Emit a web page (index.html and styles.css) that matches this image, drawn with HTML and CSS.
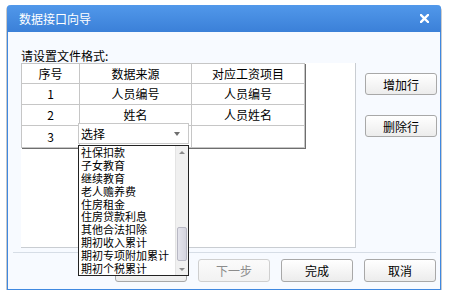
FILE: index.html
```html
<!DOCTYPE html>
<html lang="zh">
<head>
    <meta charset="UTF-8">
    <title>数据接口向导</title>
    <link rel="stylesheet" href="styles.css">
</head>
<body>
    <div class="dialog">
        <!-- 标题栏 -->
        <div class="titlebar">
            <span class="title">数据接口向导</span>
            <svg class="close" width="9" height="9" viewBox="0 0 9 9">
                <path d="M1 1 L8 8 M8 1 L1 8" stroke="#fff" stroke-width="2.4" stroke-linecap="square"/>
            </svg>
        </div>
        <div class="dialog-body">
            <div class="main">
                <div class="left">
                    <div class="label">请设置文件格式:</div>
                    <div class="panel">
                        <table class="grid">
                            <tr><td class="c1">序号</td><td class="c2">数据来源</td><td class="c3">对应工资项目</td></tr>
                            <tr><td>1</td><td>人员编号</td><td>人员编号</td></tr>
                            <tr><td>2</td><td>姓名</td><td>人员姓名</td></tr>
                            <tr class="last"><td>3</td><td class="select-cell">
                                <div class="select">
                                    <span>选择</span>
                                    <span class="arrow"></span>
                                </div>
                                <!-- 下拉列表 -->
                                <div class="dropdown">
                                    <ul class="options">
                                        <li>社保扣款</li>
                                        <li>子女教育</li>
                                        <li>继续教育</li>
                                        <li>老人赡养费</li>
                                        <li>住房租金</li>
                                        <li>住房贷款利息</li>
                                        <li>其他合法扣除</li>
                                        <li>期初收入累计</li>
                                        <li>期初专项附加累计</li>
                                        <li>期初个税累计</li>
                                    </ul>
                                    <div class="scrollbar">
                                        <span class="sb-up"></span>
                                        <span class="sb-track"><span class="sb-thumb"></span></span>
                                        <span class="sb-down"></span>
                                    </div>
                                </div>
                            </td><td></td></tr>
                        </table>
                    </div>
                </div>
                <div class="side">
                    <button class="btn">增加行</button>
                    <button class="btn">删除行</button>
                </div>
            </div>
            <!-- 底部按钮 -->
            <div class="footer">
                <button class="btn btn-hidden">上一步</button>
                <button class="btn" disabled>下一步</button>
                <button class="btn">完成</button>
                <button class="btn">取消</button>
            </div>
        </div>
    </div>
</body>
</html>
```

FILE: styles.css
```css
body {
    margin: 0;
    background-color: #ffffff;
    font-family: "Noto Sans CJK SC", "Liberation Sans", sans-serif;
    font-size: 12px;
    color: #000;
}
.dialog {
    margin: 5px 0 0 7px;
    width: 434px;
    height: 285px;
    box-sizing: border-box;
    border: 1px solid #3f88e0;
    border-top: none;
    border-radius: 4px 4px 0 0;
    background-color: #f7faff;
    box-shadow: -1px 1px 0 #c8c8c8, 1px 2px 0 #cccccc;
    display: flex;
    flex-direction: column;
}
.titlebar {
    height: 27px;
    margin: 0 -1px;
    padding: 0 12px 0 12px;
    border-radius: 4px 4px 0 0;
    background: linear-gradient(to bottom, #5198ea, #3b80d8);
    display: flex;
    align-items: center;
    justify-content: space-between;
    color: #fff;
    font-size: 12px;
    flex-shrink: 0;
}
.dialog-body {
    flex: 1;
    display: flex;
    flex-direction: column;
    padding: 16px 4px 0 5px;
}
.main {
    display: flex;
    flex: 1;
}
.left {
    padding-left: 8px;
}
.label {
    height: 15px;
    line-height: 15px;
}
.panel {
    width: 335px;
    height: 185px;
    box-sizing: border-box;
    border: 1px solid #c9cdd2;
    border-top: none;
    border-left: none;
    background-color: #ffffff;
}
.grid {
    border-collapse: collapse;
    box-shadow: 1px 1px 0 #6e6e6e;
    border-right: 1px solid #9a9a9a;
    border-bottom: 1px solid #9a9a9a;
}
.grid td {
    border: 1px solid #c6c6c6;
    text-align: center;
    height: 20px;
    padding: 0;
    line-height: 18px;
}
.grid tr:first-child td {
    height: 19px;
}
.grid .c1 { width: 57px; }
.grid .c2 { width: 111px; }
.grid .c3 { width: 112px; }
.grid tr.last td {
    height: 21px;
}
.select-cell {
    position: relative;
}
.select {
    position: absolute;
    left: -2px;
    top: -3px;
    width: 111px;
    height: 21px;
    box-sizing: border-box;
    border: 1px solid #c8c8c8;
    background-color: #fff;
    display: flex;
    align-items: center;
    justify-content: space-between;
    padding: 0 8px 0 2px;
}
.arrow {
    width: 0;
    height: 0;
    border-left: 3px solid transparent;
    border-right: 3px solid transparent;
    border-top: 4px solid #6f6f6f;
}
.dropdown {
    position: absolute;
    left: -2px;
    top: 19px;
    width: 111px;
    height: 131px;
    box-sizing: border-box;
    border: 1px solid #222;
    background-color: #fff;
    display: flex;
    z-index: 5;
    text-align: left;
}
.options {
    list-style: none;
    margin: 0;
    padding: 0 0 0 2px;
    flex: 1;
    font-size: 11px;
}
.options li {
    height: 12.9px;
    line-height: 12.9px;
    white-space: nowrap;
}
.scrollbar {
    width: 12px;
    display: flex;
    flex-direction: column;
    background-color: #f0f0f0;
    border-left: 1px solid #e4e4e4;
}
.sb-up, .sb-down {
    height: 12px;
    display: flex;
    align-items: center;
    justify-content: center;
}
.sb-up::after {
    content: "";
    border-left: 3px solid transparent;
    border-right: 3px solid transparent;
    border-bottom: 3px solid #8a8a8a;
}
.sb-down::after {
    content: "";
    border-left: 3px solid transparent;
    border-right: 3px solid transparent;
    border-top: 3px solid #8a8a8a;
}
.sb-track {
    flex: 1;
    display: flex;
    flex-direction: column;
    justify-content: flex-end;
    padding-bottom: 2px;
}
.sb-thumb {
    height: 32px;
    margin: 0 1px;
    border: 1px solid #b8b8c4;
    border-radius: 2px;
    background: linear-gradient(to right, #e4e4ec, #d4d4de);
}
.side {
    display: flex;
    flex-direction: column;
    gap: 20px;
    padding: 25px 0 0 9px;
}
.btn {
    width: 72px;
    height: 22px;
    padding: 0;
    box-sizing: border-box;
    border: 1px solid #a8a8a8;
    border-radius: 3px;
    background: linear-gradient(to bottom, #ffffff, #ececec);
    font-family: inherit;
    font-size: 12px;
    color: #000;
}
.btn:disabled {
    color: #8c8c8c;
    border-color: #cfcfcf;
    background: linear-gradient(to bottom, #fbfbfb, #f2f2f2);
}
.btn-hidden {
    color: transparent;
}
.footer {
    border-top: 1px solid #d6dde6;
    margin-top: 4px;
    height: 37px;
    box-sizing: border-box;
    padding: 6px 0 0 0;
    display: flex;
    justify-content: flex-end;
    gap: 11px;
}
.footer .btn {
    height: 23px;
}
```
